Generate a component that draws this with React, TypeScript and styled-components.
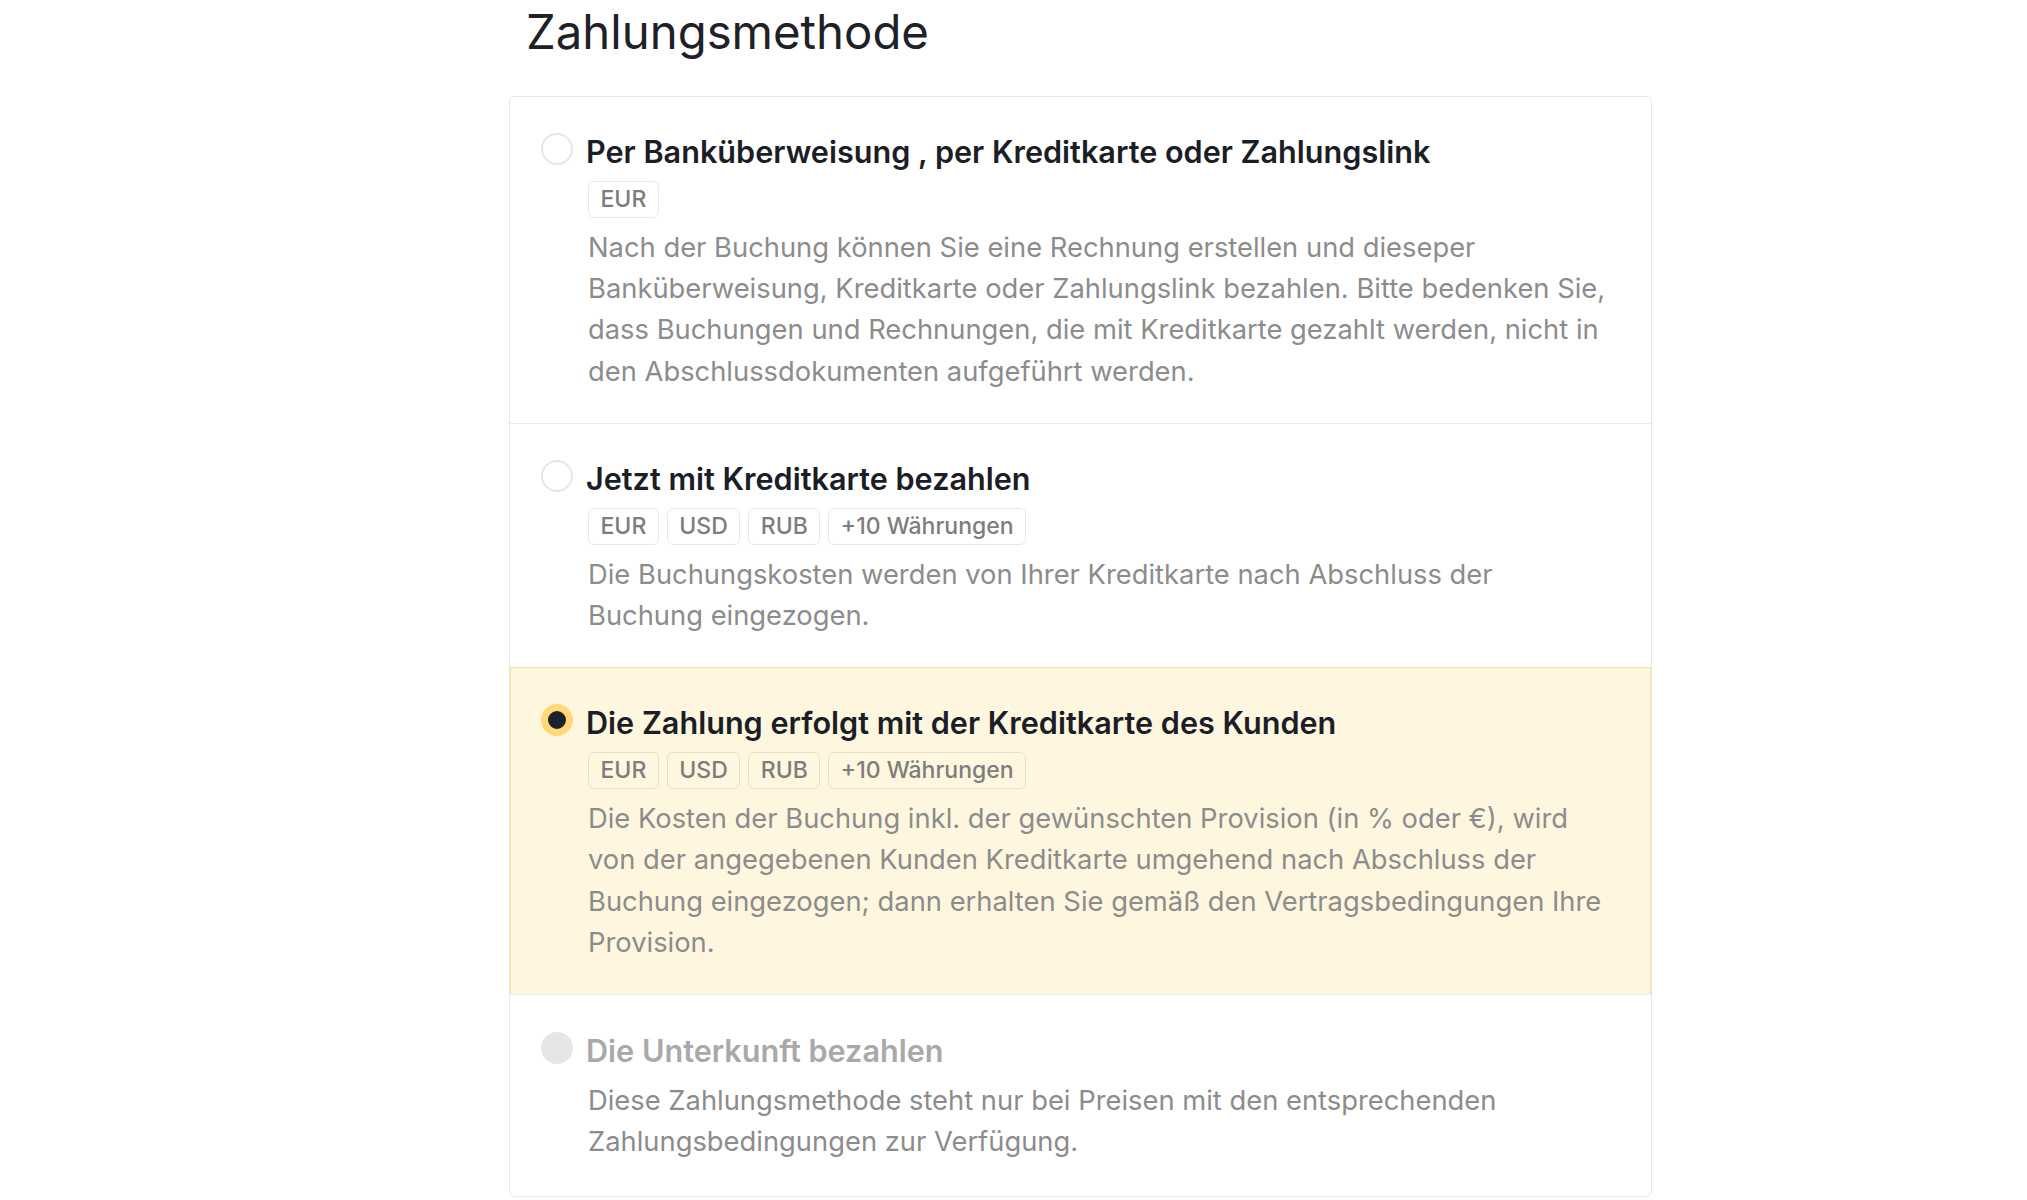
import React from "react";
import styled, { createGlobalStyle, css } from "styled-components";

const GlobalStyle = createGlobalStyle`
	html, body {
		margin: 0;
		padding: 0;
		background: #ffffff;
	}
	body {
		font-family: Inter, "Noto Sans", "Liberation Sans", sans-serif;
		-webkit-font-smoothing: antialiased;
	}
`;

type OptionState = "default" | "selected" | "disabled";

type PaymentOption = {
	id: string;
	title: string;
	currencies: string[];
	lines: string[];
	state: OptionState;
};

const options: PaymentOption[] = [
	{
		id: "invoice",
		title: "Per Banküberweisung , per Kreditkarte oder Zahlungslink",
		currencies: ["EUR"],
		lines: [
			"Nach der Buchung können Sie eine Rechnung erstellen und dieseper",
			"Banküberweisung, Kreditkarte oder Zahlungslink bezahlen. Bitte bedenken Sie,",
			"dass Buchungen und Rechnungen, die mit Kreditkarte gezahlt werden, nicht in",
			"den Abschlussdokumenten aufgeführt werden.",
		],
		state: "default",
	},
	{
		id: "card-now",
		title: "Jetzt mit Kreditkarte bezahlen",
		currencies: ["EUR", "USD", "RUB", "+10 Währungen"],
		lines: [
			"Die Buchungskosten werden von Ihrer Kreditkarte nach Abschluss der",
			"Buchung eingezogen.",
		],
		state: "default",
	},
	{
		id: "customer-card",
		title: "Die Zahlung erfolgt mit der Kreditkarte des Kunden",
		currencies: ["EUR", "USD", "RUB", "+10 Währungen"],
		lines: [
			"Die Kosten der Buchung inkl. der gewünschten Provision (in % oder €), wird",
			"von der angegebenen Kunden Kreditkarte umgehend nach Abschluss der",
			"Buchung eingezogen; dann erhalten Sie gemäß den Vertragsbedingungen Ihre",
			"Provision.",
		],
		state: "selected",
	},
	{
		id: "hotel",
		title: "Die Unterkunft bezahlen",
		currencies: [],
		lines: [
			"Diese Zahlungsmethode steht nur bei Preisen mit den entsprechenden",
			"Zahlungsbedingungen zur Verfügung.",
		],
		state: "disabled",
	},
];

const Page = styled.div`
	padding-left: 509px;
	width: 1143px;
`;

const Heading = styled.h1`
	margin: 3px 0 35px 17px;
	font-size: 47.3px;
	line-height: 58px;
	font-weight: 400;
	color: #1f2128;
`;

const Card = styled.div`
	border: 1px solid #e6e6e6;
	border-radius: 6px;
	background: #ffffff;
	overflow: hidden;
`;

const Option = styled.label<{ $state: OptionState; $first: boolean }>`
	display: flex;
	align-items: flex-start;
	gap: 13px;
	padding: 35px 31px 31px 31px;
	border-top: ${(p) => (p.$first ? "none" : "1px solid #ebebeb")};
	cursor: ${(p) => (p.$state === "disabled" ? "default" : "pointer")};

	${(p) =>
		p.$state === "selected" &&
		css`
			background: #fff6df;
			border-top-color: #fde29c;
			box-shadow: inset 1px 0 0 #fde29c, inset -1px 0 0 #fde29c;
		`}

	${(p) =>
		p.$state === "disabled" &&
		css`
			padding-top: 36px;
			padding-bottom: 34px;
		`}
`;

const Radio = styled.span<{ $state: OptionState }>`
	flex: none;
	box-sizing: border-box;
	width: 32px;
	height: 32px;
	margin-top: 1px;
	border-radius: 50%;
	border: 2px solid #e7e7e7;
	background: #ffffff;

	${(p) =>
		p.$state === "selected" &&
		css`
			border: 7px solid #ffd87a;
			background: #1f2029;
		`}

	${(p) =>
		p.$state === "disabled" &&
		css`
			border-color: #e6e6e6;
			background: #e6e6e6;
		`}
`;

const Body = styled.div`
	display: flex;
	flex-direction: column;
	gap: 9px;
	min-width: 0;
`;

const Title = styled.div<{ $disabled: boolean }>`
	font-size: 30.6px;
	line-height: 40px;
	font-weight: 600;
	color: ${(p) => (p.$disabled ? "#a9a9a9" : "#1c1e27")};
	white-space: nowrap;
`;

const TagRow = styled.div`
	display: flex;
	gap: 8px;
	margin-left: 2px;
`;

const Tag = styled.span`
	display: inline-block;
	padding: 0 11.5px;
	border: 1px solid rgba(0, 0, 0, 0.09);
	border-radius: 6px;
	font-size: 23px;
	line-height: 35px;
	font-weight: 500;
	color: #7d7d7d;
`;

const Description = styled.p`
	margin: 0 0 0 2px;
	font-size: 27.35px;
	line-height: 41.2px;
	font-weight: 400;
	color: #8c8c8c;
	white-space: nowrap;
`;

const App = () => {
	return (
		<Page>
			<GlobalStyle />
			<Heading>Zahlungsmethode</Heading>
			<Card>
				{options.map((option, index) => (
					<Option key={option.id} $state={option.state} $first={index === 0}>
						<Radio $state={option.state} />
						<Body>
							<Title $disabled={option.state === "disabled"}>{option.title}</Title>
							{option.currencies.length > 0 && (
								<TagRow>
									{option.currencies.map((currency) => (
										<Tag key={currency}>{currency}</Tag>
									))}
								</TagRow>
							)}
							<Description>
								{option.lines.map((line, i) => (
									<React.Fragment key={i}>
										{line}
										{i < option.lines.length - 1 && <br />}
									</React.Fragment>
								))}
							</Description>
						</Body>
					</Option>
				))}
			</Card>
		</Page>
	);
};

export default App;
